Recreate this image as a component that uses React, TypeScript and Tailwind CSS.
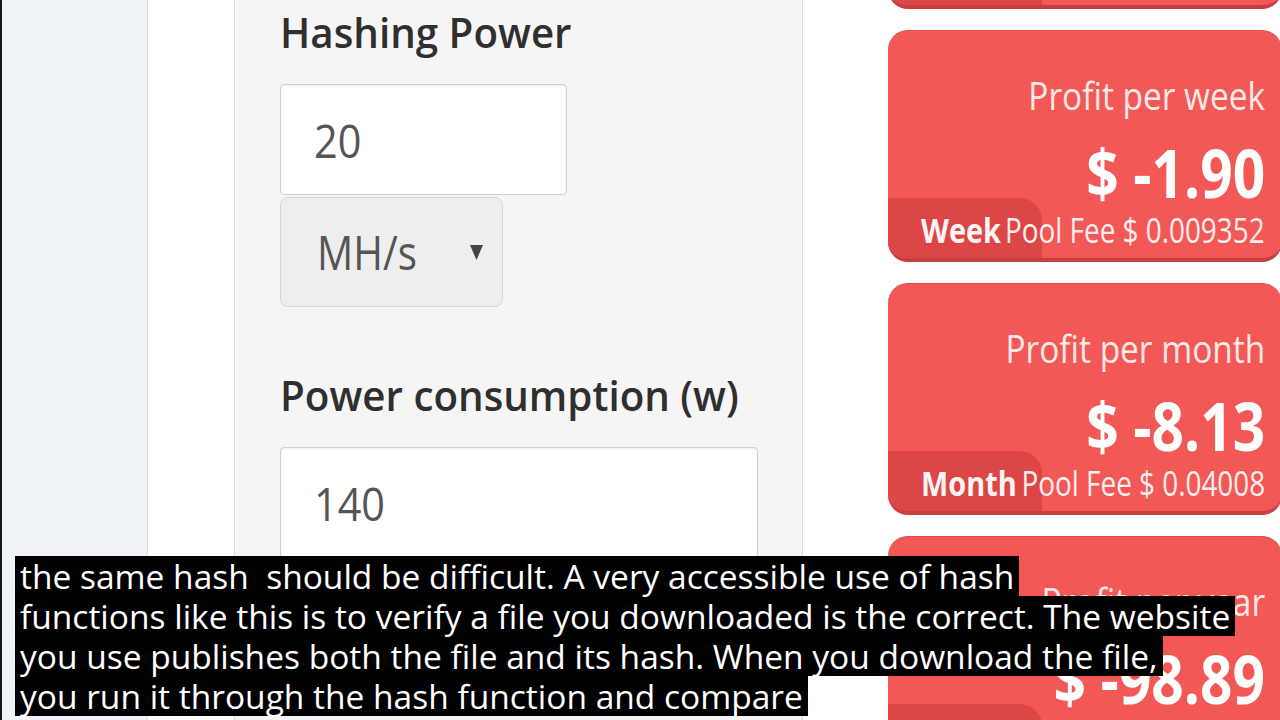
import React from "react";

type Profit = { title: string; amount: string; badge: string; fee: string };

const profits: Profit[] = [
  { title: "Profit per day", amount: "$ -0.27", badge: "Day", fee: "Pool Fee $ 0.001336" },
  { title: "Profit per week", amount: "$ -1.90", badge: "Week", fee: "Pool Fee $ 0.009352" },
  { title: "Profit per month", amount: "$ -8.13", badge: "Month", fee: "Pool Fee $ 0.04008" },
  { title: "Profit per year", amount: "$ -98.89", badge: "Year", fee: "Pool Fee $ 0.4876" },
];

const captions = [
  "the same hash  should be difficult. A very accessible use of hash",
  "functions like this is to verify a file you downloaded is the correct. The website",
  "you use publishes both the file and its hash. When you download the file,",
  "you run it through the hash function and compare",
];

function ProfitCard({ p }: { p: Profit }) {
  return (
    <div className="relative h-[232px] shrink-0 overflow-hidden rounded-[20px] border-t border-b-4 border-t-[#dc4b49] border-b-[#c73f3f] bg-[#f25856]">
      {/* period badge sits under the fee line */}
      <div className="absolute bottom-0 left-0 h-[60px] w-[154px] rounded-tr-[22px] bg-[#dc4646] pl-[33px] pt-[15px]">
        <span className="block origin-left scale-x-[0.85] whitespace-nowrap text-[34px] font-bold leading-[34px] text-[#fff4f4]">
          {p.badge}
        </span>
      </div>
      <div className="relative flex flex-col items-end pr-[17px] pt-[45px]">
        <span className="inline-block origin-right scale-x-[0.88] whitespace-nowrap text-[38px] leading-[38px] text-[#ffe9e7]">
          {p.title}
        </span>
        <span className="mt-[25px] inline-block origin-right scale-x-[0.86] whitespace-nowrap text-[66px] font-bold leading-[66px] text-white">
          {p.amount}
        </span>
        <span className="mt-[8px] inline-block origin-right scale-x-[0.82] whitespace-nowrap text-[34px] leading-[34px] text-[#ffeeee]">
          {p.fee}
        </span>
      </div>
    </div>
  );
}

function Label({ children, className = "" }: { children: React.ReactNode; className?: string }) {
  return (
    <div className={`h-[42px] ${className}`}>
      <span className="inline-block origin-left scale-x-[0.96] whitespace-nowrap text-[42px] font-semibold leading-[42px] text-[#2f2f2f]">
        {children}
      </span>
    </div>
  );
}

function TextInput({ value, width }: { value: string; width: string }) {
  return (
    <div
      className={`mt-[31px] flex h-[111px] items-center rounded-[4px] border border-[#cfcfcf] bg-white pl-[33px] shadow-[inset_0_1px_2px_rgba(0,0,0,0.08)] ${width}`}
    >
      <span className="inline-block origin-left scale-x-[0.9] text-[46px] leading-[46px] text-[#555555]">{value}</span>
    </div>
  );
}

export default function App() {
  return (
    <div className="relative flex h-[720px] w-[1280px] items-start overflow-hidden bg-white font-['Open_Sans',sans-serif]">
      <div className="h-full w-[2px] shrink-0 bg-[#151515]" />
      <div className="h-full w-[146px] shrink-0 border-r border-[#dde1e6] bg-[#eff2f6]" />
      <div className="h-full w-[86px] shrink-0 bg-white" />

      {/* calculator form panel */}
      <div className="h-full w-[569px] shrink-0 border-x border-[#dcdcdc] bg-[#f5f5f5] pl-[45px] pt-[11px]">
        <Label>Hashing Power</Label>
        <TextInput value="20" width="w-[287px]" />
        <div className="mt-[2px] flex h-[110px] w-[223px] items-center justify-between rounded-[8px] border border-[#d6d6d6] bg-[#eeeeee] pl-[36px] pr-[19px]">
          <span className="inline-block origin-left scale-x-[0.84] text-[48px] leading-[48px] text-[#555555]">MH/s</span>
          <svg width="13" height="15" viewBox="0 0 13 15">
            <polygon points="0,0 13,0 6.5,15" fill="#444444" />
          </svg>
        </div>
        <Label className="mt-[67px]">Power consumption (w)</Label>
        <TextInput value="140" width="w-[478px]" />
      </div>

      <div className="h-full w-[85px] shrink-0 bg-white" />

      {/* profit cards column */}
      <div className="-mt-[223px] flex w-[394px] shrink-0 flex-col gap-[21px]">
        {profits.map((p) => (
          <ProfitCard key={p.badge} p={p} />
        ))}
      </div>

      {/* burned-in subtitles */}
      <div className="absolute bottom-[4px] left-[15px]">
        {captions.map((line) => (
          <div
            key={line}
            className="h-[40px] w-fit whitespace-pre bg-black px-[5px] text-[33.5px] leading-[40px] text-white"
          >
            {line}
          </div>
        ))}
      </div>
    </div>
  );
}
